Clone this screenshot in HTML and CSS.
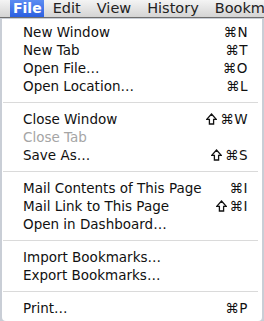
FILE: index.html
```html
<!DOCTYPE html>
<html lang="en">
<head>
    <meta charset="UTF-8">
    <title>File Menu</title>
    <link rel="stylesheet" href="styles.css">
</head>
<body>
    <div class="menubar">
        <span class="title active">File</span>
        <span class="title">Edit</span>
        <span class="title">View</span>
        <span class="title">History</span>
        <span class="title last">Bookm</span>
    </div>
    <div class="screen">
        <div class="menu">
            <div class="item"><span>New Window</span><span class="key">⌘N</span></div>
            <div class="item"><span>New Tab</span><span class="key">⌘T</span></div>
            <div class="item"><span>Open File…</span><span class="key">⌘O</span></div>
            <div class="item"><span>Open Location…</span><span class="key">⌘L</span></div>
            <div class="sep"></div>
            <div class="item"><span>Close Window</span><span class="key"><svg class="shift" viewBox="0 0 11 12"><path d="M5.5 1 L10.3 6.4 L7.6 6.4 L7.6 11 L3.4 11 L3.4 6.4 L0.7 6.4 Z"/></svg>⌘W</span></div>
            <div class="item disabled"><span>Close Tab</span></div>
            <div class="item"><span>Save As…</span><span class="key"><svg class="shift" viewBox="0 0 11 12"><path d="M5.5 1 L10.3 6.4 L7.6 6.4 L7.6 11 L3.4 11 L3.4 6.4 L0.7 6.4 Z"/></svg>⌘S</span></div>
            <div class="sep"></div>
            <div class="item"><span>Mail Contents of This Page</span><span class="key">⌘I</span></div>
            <div class="item"><span>Mail Link to This Page</span><span class="key"><svg class="shift" viewBox="0 0 11 12"><path d="M5.5 1 L10.3 6.4 L7.6 6.4 L7.6 11 L3.4 11 L3.4 6.4 L0.7 6.4 Z"/></svg>⌘I</span></div>
            <div class="item"><span>Open in Dashboard…</span></div>
            <div class="sep"></div>
            <div class="item"><span>Import Bookmarks…</span></div>
            <div class="item"><span>Export Bookmarks…</span></div>
            <div class="sep"></div>
            <div class="item"><span>Print…</span><span class="key">⌘P</span></div>
        </div>
    </div>
</body>
</html>
```

FILE: styles.css
```css
body {
    margin: 0;
    width: 264px;
    height: 321px;
    overflow: hidden;
    font-family: "DejaVu Sans", Verdana, sans-serif;
    background: #c9ced6;
}
.menubar {
    height: 17px;
    display: flex;
    padding-left: 10px;
    background: linear-gradient(#f4f4f4, #d4d4d4);
    border-bottom: 1px solid #6e6e6e;
    white-space: nowrap;
    overflow: hidden;
}
.title {
    font-size: 14.5px;
    line-height: 17px;
    padding: 0 8px;
    color: #222;
}
.title.active {
    background: linear-gradient(#5c8cf2, #2b5fe0);
    color: #fff;
    font-weight: bold;
    font-size: 14px;
    padding: 0 2px 0 3px;
    margin-right: 1px;
}
.title.last {
    padding-right: 0;
}
.screen {
    padding: 1px 2px 0 2px;
}
.menu {
    background: #fff;
    border-radius: 0 0 4px 4px;
    padding: 4px 0 3px;
    height: 302px;
    box-sizing: border-box;
}
.item {
    display: flex;
    justify-content: space-between;
    height: 18px;
    line-height: 18px;
    padding: 0 14px 0 21px;
    font-size: 13.5px;
    color: #111;
}
.item.disabled {
    color: #a5a5a5;
}
.key {
    display: flex;
    align-items: center;
    letter-spacing: 0.5px;
}
.shift {
    width: 11px;
    height: 12px;
    margin-right: 3px;
    fill: none;
    stroke: #111;
    stroke-width: 1.3;
    stroke-linejoin: miter;
}
.sep {
    height: 1px;
    background: #dadada;
    margin: 7px 4px 7px 1px;
}
```
